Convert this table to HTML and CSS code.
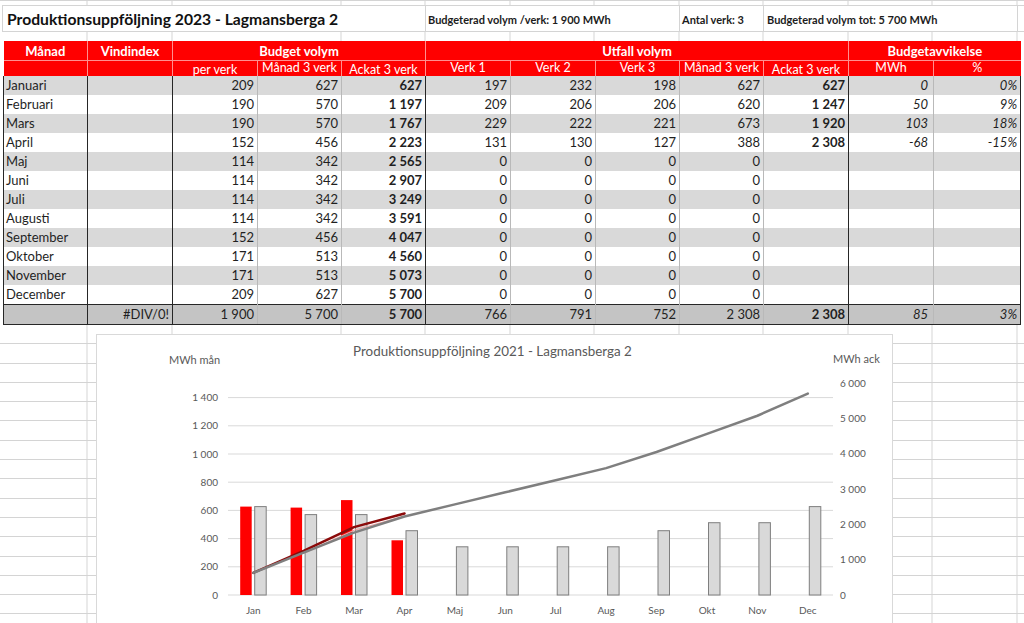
FILE: index.html
```html
<!DOCTYPE html>
<html lang="sv">
<head>
<meta charset="utf-8">
<title>Produktionsuppföljning 2023 - Lagmansberga 2</title>
<link rel="stylesheet" href="styles.css">
</head>
<body>
<div class="top-strip"></div>
<div class="title-row">
  <div class="tcell tcell-main"><h1 class="title">Produktionsuppföljning 2023 - Lagmansberga 2</h1></div>
  <div class="tcell tcell-wide">Budgeterad volym /verk: 1&nbsp;900 MWh</div>
  <div class="tcell tcell-narrow">Antal verk: 3</div>
  <div class="tcell tcell-wide tcell-last">Budgeterad volym tot: 5&nbsp;700 MWh</div>
</div>
<div class="spacer"></div>
<table class="prod">
  <colgroup>
    <col class="c84"><col class="c85"><col class="c85"><col class="c84"><col class="c84"><col class="c85">
    <col class="c85"><col class="c84"><col class="c84"><col class="c85"><col class="c85"><col class="c87">
  </colgroup>
  <thead>
    <tr class="hrow1">
      <th>Månad</th><th>Vindindex</th><th colspan="3">Budget volym</th><th colspan="5">Utfall volym</th><th colspan="2" class="hlast">Budgetavvikelse</th>
    </tr>
    <tr class="hrow2">
      <th></th><th></th><th class="vb">per verk</th><th class="vt">Månad 3 verk</th><th class="vb">Ackat 3 verk</th>
      <th class="vt">Verk 1</th><th class="vt">Verk 2</th><th class="vt">Verk 3</th><th class="vt">Månad 3 verk</th><th class="vb">Ackat 3 verk</th>
      <th class="vt">MWh</th><th class="vt hlast">%</th>
    </tr>
  </thead>
  <tbody>
    <tr><td>Januari</td><td></td><td>209</td><td>627</td><td>627</td><td>197</td><td>232</td><td>198</td><td>627</td><td>627</td><td>0</td><td>0%</td></tr>
    <tr><td>Februari</td><td></td><td>190</td><td>570</td><td>1&nbsp;197</td><td>209</td><td>206</td><td>206</td><td>620</td><td>1&nbsp;247</td><td>50</td><td>9%</td></tr>
    <tr><td>Mars</td><td></td><td>190</td><td>570</td><td>1&nbsp;767</td><td>229</td><td>222</td><td>221</td><td>673</td><td>1&nbsp;920</td><td>103</td><td>18%</td></tr>
    <tr><td>April</td><td></td><td>152</td><td>456</td><td>2&nbsp;223</td><td>131</td><td>130</td><td>127</td><td>388</td><td>2&nbsp;308</td><td>-68</td><td>-15%</td></tr>
    <tr><td>Maj</td><td></td><td>114</td><td>342</td><td>2&nbsp;565</td><td>0</td><td>0</td><td>0</td><td>0</td><td></td><td></td><td></td></tr>
    <tr><td>Juni</td><td></td><td>114</td><td>342</td><td>2&nbsp;907</td><td>0</td><td>0</td><td>0</td><td>0</td><td></td><td></td><td></td></tr>
    <tr><td>Juli</td><td></td><td>114</td><td>342</td><td>3&nbsp;249</td><td>0</td><td>0</td><td>0</td><td>0</td><td></td><td></td><td></td></tr>
    <tr><td>Augusti</td><td></td><td>114</td><td>342</td><td>3&nbsp;591</td><td>0</td><td>0</td><td>0</td><td>0</td><td></td><td></td><td></td></tr>
    <tr><td>September</td><td></td><td>152</td><td>456</td><td>4&nbsp;047</td><td>0</td><td>0</td><td>0</td><td>0</td><td></td><td></td><td></td></tr>
    <tr><td>Oktober</td><td></td><td>171</td><td>513</td><td>4&nbsp;560</td><td>0</td><td>0</td><td>0</td><td>0</td><td></td><td></td><td></td></tr>
    <tr><td>November</td><td></td><td>171</td><td>513</td><td>5&nbsp;073</td><td>0</td><td>0</td><td>0</td><td>0</td><td></td><td></td><td></td></tr>
    <tr><td>December</td><td></td><td>209</td><td>627</td><td>5&nbsp;700</td><td>0</td><td>0</td><td>0</td><td>0</td><td></td><td></td><td></td></tr>
    <tr class="total"><td></td><td>#DIV/0!</td><td>1&nbsp;900</td><td>5&nbsp;700</td><td>5&nbsp;700</td><td>766</td><td>791</td><td>752</td><td>2&nbsp;308</td><td>2&nbsp;308</td><td>85</td><td>3%</td></tr>
  </tbody>
</table>
<div class="below">
  <div class="chart">
    <svg class="chart-svg" width="795" height="290" viewBox="0 0 795 290" xmlns="http://www.w3.org/2000/svg">
      <text class="ch-title" x="395.5" y="16" text-anchor="middle" dy=".35em">Produktionsuppföljning 2021 - Lagmansberga 2</text>
      <text class="ch-axis-title" x="72" y="25" dy=".35em">MWh mån</text>
      <text class="ch-axis-title" x="736" y="24" dy=".35em">MWh ack</text>
      <g class="grid">
        <line x1="131" x2="736" y1="260" y2="260"/>
        <line x1="131" x2="736" y1="231.8" y2="231.8"/>
        <line x1="131" x2="736" y1="203.6" y2="203.6"/>
        <line x1="131" x2="736" y1="175.4" y2="175.4"/>
        <line x1="131" x2="736" y1="147.2" y2="147.2"/>
        <line x1="131" x2="736" y1="119" y2="119"/>
        <line x1="131" x2="736" y1="90.8" y2="90.8"/>
        <line x1="131" x2="736" y1="62.6" y2="62.6"/>
      </g>
      <g class="lbl" text-anchor="end">
        <text x="121" y="260" dy=".35em">0</text>
        <text x="121" y="231.8" dy=".35em">200</text>
        <text x="121" y="203.6" dy=".35em">400</text>
        <text x="121" y="175.4" dy=".35em">600</text>
        <text x="121" y="147.2" dy=".35em">800</text>
        <text x="121" y="119" dy=".35em">1 000</text>
        <text x="121" y="90.8" dy=".35em">1 200</text>
        <text x="121" y="62.6" dy=".35em">1 400</text>
      </g>
      <g class="lbl" text-anchor="start">
        <text x="743" y="260" dy=".35em">0</text>
        <text x="743" y="224.7" dy=".35em">1 000</text>
        <text x="743" y="189.3" dy=".35em">2 000</text>
        <text x="743" y="154" dy=".35em">3 000</text>
        <text x="743" y="118.7" dy=".35em">4 000</text>
        <text x="743" y="83.3" dy=".35em">5 000</text>
        <text x="743" y="48" dy=".35em">6 000</text>
      </g>
      <g class="lbl" text-anchor="middle">
        <text x="156.2" y="275" dy=".35em">Jan</text>
        <text x="206.6" y="275" dy=".35em">Feb</text>
        <text x="257" y="275" dy=".35em">Mar</text>
        <text x="307.5" y="275" dy=".35em">Apr</text>
        <text x="357.9" y="275" dy=".35em">Maj</text>
        <text x="408.3" y="275" dy=".35em">Jun</text>
        <text x="458.7" y="275" dy=".35em">Jul</text>
        <text x="509.1" y="275" dy=".35em">Aug</text>
        <text x="559.5" y="275" dy=".35em">Sep</text>
        <text x="610" y="275" dy=".35em">Okt</text>
        <text x="660.4" y="275" dy=".35em">Nov</text>
        <text x="710.8" y="275" dy=".35em">Dec</text>
      </g>
      <g class="bar-red">
        <rect x="143.2" y="171.6" width="11.5" height="88.4"/>
        <rect x="193.6" y="172.6" width="11.5" height="87.4"/>
        <rect x="244" y="165.1" width="11.5" height="94.9"/>
        <rect x="294.5" y="205.3" width="11.5" height="54.7"/>
      </g>
      <g class="bar-grey">
        <rect x="157.7" y="171.6" width="11.5" height="88.4"/>
        <rect x="208.1" y="179.6" width="11.5" height="80.4"/>
        <rect x="258.5" y="179.6" width="11.5" height="80.4"/>
        <rect x="309" y="195.7" width="11.5" height="64.3"/>
        <rect x="359.4" y="211.8" width="11.5" height="48.2"/>
        <rect x="409.8" y="211.8" width="11.5" height="48.2"/>
        <rect x="460.2" y="211.8" width="11.5" height="48.2"/>
        <rect x="510.6" y="211.8" width="11.5" height="48.2"/>
        <rect x="561" y="195.7" width="11.5" height="64.3"/>
        <rect x="611.5" y="187.7" width="11.5" height="72.3"/>
        <rect x="661.9" y="187.7" width="11.5" height="72.3"/>
        <rect x="712.3" y="171.6" width="11.5" height="88.4"/>
      </g>
      <polyline class="line-pink" points="206.6,218.4 257,195.2 307.5,181.2"/>
      <polyline class="line-red" points="156.2,237.85 206.6,215.94 257,192.16 307.5,178.45"/>
      <polyline class="line-grey" points="156.2,237.85 206.6,217.71 257,197.57 307.5,181.45 357.9,169.37 408.3,157.29 458.7,145.2 509.1,133.12 559.5,117.01 610,98.88 660.4,80.75 710.8,58.6"/>
    </svg>
  </div>
</div>
</body>
</html>
```

FILE: styles.css
```css
html, body {
  margin: 0;
  padding: 0;
}
body {
  width: 1024px;
  height: 623px;
  overflow: hidden;
  font-family: Lato, "Liberation Sans", sans-serif;
  color: #1c1c1c;
  background-color: #fff;
  background-image: repeating-linear-gradient(to right, transparent 0 83.5px, #d4d4d4 83.5px 84.5px);
  background-position: 3.5px 0;
}

.top-strip {
  height: 5px;
  box-sizing: border-box;
  border-top: 1px solid #d4d4d4;
}

.title-row {
  display: flex;
  height: 27px;
  box-sizing: border-box;
  margin-left: 2px;
  border-top: 1px solid #d4d4d4;
  border-bottom: 1px solid #d4d4d4;
  border-left: 1px solid #d4d4d4;
  background: #fff;
}
.tcell {
  box-sizing: border-box;
  border-right: 1px solid #d4d4d4;
  display: flex;
  align-items: center;
  font-size: 11px;
  font-weight: bold;
  white-space: nowrap;
  padding-left: 2px;
  padding-top: 1px;
}
.tcell-main { width: 423px; padding-left: 4px; }
.tcell-wide { width: 254px; }
.tcell-narrow { width: 84px; }
.tcell-last { padding-left: 3px; }
.title {
  margin: 0;
  font-size: 15.7px;
  font-weight: bold;
  color: #111;
}

.spacer {
  height: 9px;
}

.prod {
  margin-left: 3px;
  width: 1017px;
  table-layout: fixed;
  border-collapse: collapse;
  font-size: 13px;
}
.c84 { width: 84px; }
.c85 { width: 85px; }
.c87 { width: 87px; }

.prod th {
  background: #ff0000;
  color: #fff;
  padding: 0;
  border: 0;
  border-right: 1px solid #ff9090;
  white-space: nowrap;
}
.prod th.hlast { border-right: 0; }
.hrow1 th {
  height: 19px;
  font-size: 13px;
  font-weight: bold;
  border-bottom: 1px solid #ff9090;
  vertical-align: middle;
}
.hrow2 th {
  height: 15px;
  font-size: 12.5px;
  font-weight: normal;
  line-height: 13px;
}
.hrow2 th.vt { vertical-align: top; padding-top: 0; }
.hrow2 th.vb { vertical-align: bottom; padding-bottom: 0; }

.prod td {
  height: 19px;
  padding: 0 3px 0 2px;
  border: 0;
  border-right: 1px solid #b9b9b9;
  white-space: nowrap;
  vertical-align: middle;
  line-height: 15px;
  color: #1f1f1f;
}
.prod tbody tr:nth-child(odd) { background: #d9d9d9; }
.prod tbody tr:nth-child(even) { background: #fff; }
.prod td:nth-child(n+2) { text-align: right; }
.prod td:nth-child(1) { border-left: 1px solid #262626; }
.prod td:nth-child(1),
.prod td:nth-child(2),
.prod td:nth-child(5),
.prod td:nth-child(10),
.prod td:nth-child(12) { border-right: 1px solid #262626; }
.prod td:nth-child(5),
.prod td:nth-child(10) { font-weight: bold; }
.prod td:nth-child(11),
.prod td:nth-child(12) { font-style: italic; }
.prod td:nth-child(11) { padding-right: 5px; }
.prod tbody tr.total { background: #c4c4c4; }
.prod tr.total td {
  border-top: 1px solid #262626;
  border-bottom: 1px solid #262626;
}

.below {
  height: 300px;
  box-sizing: border-box;
  background-image: repeating-linear-gradient(to bottom, transparent 0 18.3px, #d4d4d4 18.3px 19.3px);
  padding-top: 10px;
}
.chart {
  margin-left: 97px;
  width: 795px;
  height: 290px;
  background: #fff;
  outline: 1px solid #d9d9d9;
}
.chart-svg {
  display: block;
  font-family: Lato, "Liberation Sans", sans-serif;
}
.ch-title { font-size: 13.4px; fill: #595959; }
.ch-axis-title { font-size: 11px; fill: #595959; }
.lbl { font-size: 10px; fill: #595959; }
.grid line { stroke: #d9d9d9; stroke-width: 1; }
.bar-red rect { fill: #ff0000; }
.bar-grey rect { fill: #d9d9d9; stroke: #7f7f7f; stroke-width: 1; }
.line-grey { fill: none; stroke: #7f7f7f; stroke-width: 2.5; stroke-linejoin: round; stroke-linecap: round; }
.line-red { fill: none; stroke: #8b0a0a; stroke-width: 2.5; stroke-linejoin: round; stroke-linecap: round; }
.line-pink { fill: none; stroke: #eba5a5; stroke-width: 1.2; }
```
